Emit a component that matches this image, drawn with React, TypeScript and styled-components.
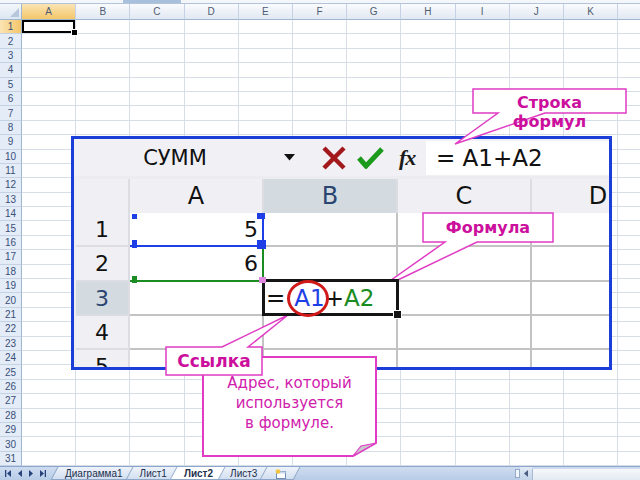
import React from "react";
import styled, { createGlobalStyle, css } from "styled-components";

const GlobalStyle = createGlobalStyle`
  html, body { margin: 0; padding: 0; background: #fff; }
  body { font-family: "Liberation Sans", Arial, sans-serif; }
`;

const Page = styled.div`
  position: relative;
  width: 640px;
  height: 480px;
  overflow: hidden;
  display: flex;
  flex-direction: column;
  background: #fff;
`;

const TopStrip = styled.div`
  flex: none;
  height: 3px;
  background: #f3f6fa;
  border-bottom: 1px solid #b3c3d9;
  display: flex;
  padding-left: 123px;
`;

const TopTab = styled.div`
  width: 58px;
  background: #a9c0dd;
`;

const Sheet = styled.div`
  flex: none;
  display: grid;
  grid-template-columns: 22px repeat(12, 54.2px);
  grid-template-rows: 16px repeat(31, 14.4px);
`;

const Corner = styled.div`
  box-sizing: border-box;
  background: linear-gradient(#f4f7fb, #dce6f2);
  border-right: 1px solid #9eb6ce;
  border-bottom: 1px solid #9eb6ce;
  display: flex;
  align-items: flex-end;
  justify-content: flex-end;
  padding: 2px;
`;

const CornerTri = styled.div`
  width: 0;
  height: 0;
  border-left: 9px solid transparent;
  border-bottom: 9px solid #b6c7dc;
`;

const ColHead = styled.div<{ $active?: boolean }>`
  box-sizing: border-box;
  display: flex;
  align-items: center;
  justify-content: center;
  font-size: 10px;
  color: #4f5d72;
  border-right: 1px solid #c5d2e3;
  border-bottom: 1px solid #9eb6ce;
  background: ${(p) =>
    p.$active
      ? "linear-gradient(#fbe4b4, #f4c66a)"
      : "linear-gradient(#f9fbfd, #e1e8f2)"};
`;

const RowHead = styled.div<{ $active?: boolean }>`
  box-sizing: border-box;
  display: flex;
  align-items: center;
  justify-content: center;
  font-size: 10px;
  color: #3a5077;
  border-right: 1px solid #9eb6ce;
  border-bottom: 1px solid #c5d2e3;
  background: ${(p) =>
    p.$active ? "linear-gradient(90deg, #fbe4b4, #f4c66a)" : "#e4ecf7"};
`;

const Cell = styled.div<{ $selected?: boolean }>`
  box-sizing: border-box;
  position: relative;
  border-right: 1px solid #d8dee8;
  border-bottom: 1px solid #d8dee8;
  ${(p) =>
    p.$selected &&
    css`
      box-shadow: inset 0 0 0 2px #000;
      &::after {
        content: "";
        position: absolute;
        right: -3px;
        bottom: -3px;
        width: 5px;
        height: 5px;
        background: #000;
        border: 1px solid #fff;
        z-index: 1;
      }
    `}
`;

/* ---------- sheet tabs ---------- */

const TabBar = styled.div`
  flex: 1;
  display: flex;
  align-items: stretch;
  background: linear-gradient(#cedcf0, #b8cce7);
  border-top: 1px solid #8aa6cc;
  isolation: isolate;
`;

const Nav = styled.div`
  width: 50px;
  box-sizing: border-box;
  display: flex;
  align-items: center;
  justify-content: space-between;
  padding: 0 4px 0 5px;
`;

const Tabs = styled.div`
  display: flex;
  align-items: stretch;
  padding-left: 4px;
`;

const Tab = styled.div<{ $active?: boolean }>`
  position: relative;
  z-index: ${(p) => (p.$active ? 3 : 1)};
  display: flex;
  align-items: center;
  padding: 0 9px 0 11px;
  margin-right: -3px;
  font-size: 10px;
  color: #1d2f4e;
  font-weight: ${(p) => (p.$active ? 700 : 400)};
  &::before {
    content: "";
    position: absolute;
    inset: 0 0 0 0;
    z-index: -1;
    transform: skewX(-28deg);
    background: ${(p) =>
      p.$active ? "#ffffff" : "linear-gradient(#eef3fa, #d3dff0)"};
    border: 1px solid #8ea7c9;
    border-top: none;
  }
`;

const NewTab = styled(Tab)`
  padding: 0 10px 0 12px;
`;

const HScroll = styled.div`
  margin-left: auto;
  width: 125px;
  display: flex;
  align-items: stretch;
`;

const Splitter = styled.div`
  width: 3px;
  margin: 2px 0;
  background: #f2f5fa;
  border: 1px solid #94a9c6;
`;

const ScrollBtn = styled.div`
  width: 12px;
  display: flex;
  align-items: center;
  justify-content: center;
  background: linear-gradient(#e2eaf5, #c4d4ea);
`;

const Track = styled.div`
  flex: 1;
  margin-top: 2px;
  background: linear-gradient(#f6f8fb, #e4eaf2);
  border-left: 1px solid #a8bad2;
`;

/* ---------- magnified inset ---------- */

const Inset = styled.div`
  position: absolute;
  left: 71px;
  top: 136px;
  width: 541px;
  height: 234px;
  box-sizing: border-box;
  border: 3px solid #1b3ed8;
  background: #ececf1;
  display: flex;
  flex-direction: column;
  overflow: hidden;
  font-family: "DejaVu Sans", Verdana, sans-serif;
  color: #111;
`;

const FormulaBar = styled.div`
  flex: none;
  height: 37px;
  display: flex;
  align-items: center;
  background: #f0f0f5;
`;

const NameBox = styled.div`
  width: 202px;
  text-align: center;
  font-size: 21px;
`;

const DropSlot = styled.div`
  width: 26px;
  display: flex;
  justify-content: center;
`;

const ToolIcon = styled.svg<{ $gap: number }>`
  flex: none;
  margin-left: ${(p) => p.$gap}px;
`;

const FxLabel = styled.span`
  flex: none;
  width: 22px;
  margin-left: 15px;
  font-family: "Liberation Serif", "Times New Roman", serif;
  font-style: italic;
  font-weight: 700;
  font-size: 22px;
  letter-spacing: -1px;
  color: #1a1a1a;
`;

const FormulaInput = styled.div`
  flex: 1;
  align-self: stretch;
  margin: 2px 0 1px 5px;
  background: #fff;
  display: flex;
  align-items: center;
  padding-left: 10px;
  font-size: 23px;
  white-space: pre;
`;

const ZoomGrid = styled.div`
  flex: none;
  margin: 3px 0 0 2px;
  display: grid;
  grid-template-columns: 54px repeat(4, 134px);
  grid-template-rows: 34px 34px 35px 34px 34px 34px;
  background: #fff;
`;

const ZHead = styled.div<{ $active?: boolean }>`
  box-sizing: border-box;
  display: flex;
  align-items: center;
  justify-content: center;
  font-size: 24px;
  background: ${(p) => (p.$active ? "#d3dbe1" : "#f0f0f4")};
  color: ${(p) => (p.$active ? "#2b4570" : "#111")};
  border-right: 2px solid #dcdce3;
`;

const ZRowHead = styled.div<{ $active?: boolean }>`
  box-sizing: border-box;
  display: flex;
  align-items: center;
  justify-content: center;
  font-size: 22px;
  background: ${(p) => (p.$active ? "#d3dbe1" : "#f0f0f4")};
  color: ${(p) => (p.$active ? "#2b4570" : "#111")};
  border-bottom: 2px solid #dcdce3;
  border-right: 2px solid #dcdce3;
`;

type RangeColor = "blue" | "green";
const rangeColor = { blue: "#1f3fe6", green: "#1a8c22" };

const ZCell = styled.div<{ $range?: RangeColor; $editing?: boolean }>`
  box-sizing: border-box;
  position: relative;
  display: flex;
  align-items: center;
  justify-content: flex-end;
  padding-right: 4px;
  font-size: 22px;
  background: #fff;
  border-right: 2px solid ${(p) => (p.$range ? rangeColor[p.$range] : "#c3c3c3")};
  border-bottom: 2px solid ${(p) => (p.$range ? rangeColor[p.$range] : "#c3c3c3")};
  ${(p) =>
    p.$editing &&
    css`
      z-index: 2;
      justify-content: flex-start;
      padding: 0 0 0 2px;
      font-size: 23px;
      &::before {
        content: "";
        position: absolute;
        left: -2px;
        top: -3px;
        right: -3px;
        bottom: -2px;
        border: 3px solid #151515;
      }
      &::after {
        content: "";
        position: absolute;
        right: -6px;
        bottom: -5px;
        width: 7px;
        height: 7px;
        background: #151515;
        border: 1px solid #fff;
      }
    `}
`;

const Handle = styled.span<{
  $c: string;
  $l?: number;
  $r?: number;
  $t?: number;
  $b?: number;
  $w: number;
  $h: number;
}>`
  position: absolute;
  z-index: 3;
  width: ${(p) => p.$w}px;
  height: ${(p) => p.$h}px;
  background: ${(p) => p.$c};
  ${(p) => (p.$l !== undefined ? `left: ${p.$l}px;` : "")}
  ${(p) => (p.$r !== undefined ? `right: ${p.$r}px;` : "")}
  ${(p) => (p.$t !== undefined ? `top: ${p.$t}px;` : "")}
  ${(p) => (p.$b !== undefined ? `bottom: ${p.$b}px;` : "")}
`;

const Ref = styled.span<{ $c: string; $gap?: number }>`
  color: ${(p) => p.$c};
  margin-left: ${(p) => p.$gap ?? 0}px;
`;

const RedRing = styled.span`
  position: absolute;
  left: 23px;
  top: -2px;
  width: 42px;
  height: 37px;
  box-sizing: border-box;
  border: 3px solid #d01a1a;
  border-radius: 50%;
`;

/* ---------- callouts ---------- */

const Bubble = styled.div<{ $x: number; $y: number; $w: number; $h: number }>`
  position: absolute;
  left: ${(p) => p.$x}px;
  top: ${(p) => p.$y}px;
  width: ${(p) => p.$w}px;
  height: ${(p) => p.$h}px;
  pointer-events: none;
`;

const BubbleShape = styled.svg`
  position: absolute;
  inset: 0;
  width: 100%;
  height: 100%;
  overflow: visible;
`;

const BubbleLabel = styled.div<{ $top?: number; $bold?: boolean; $size: number; $lh: number }>`
  position: relative;
  height: 100%;
  box-sizing: border-box;
  display: flex;
  flex-direction: column;
  align-items: center;
  justify-content: ${(p) => (p.$top !== undefined ? "flex-start" : "center")};
  padding-top: ${(p) => p.$top ?? 0}px;
  font-family: "DejaVu Sans", Verdana, sans-serif;
  font-weight: ${(p) => (p.$bold ? 700 : 400)};
  font-size: ${(p) => p.$size}px;
  line-height: ${(p) => p.$lh}px;
  color: ${(p) => (p.$bold ? "#cc0f9c" : "#d020ac")};
  text-align: center;
  white-space: nowrap;
`;

type CalloutProps = {
  x: number;
  y: number;
  w: number;
  h: number;
  d: string;
  fold?: string;
  sw?: number;
  children: React.ReactNode;
};

function Callout({ x, y, w, h, d, fold, sw = 1.5, children }: CalloutProps) {
  return (
    <Bubble $x={x} $y={y} $w={w} $h={h}>
      <BubbleShape viewBox={`${x} ${y} ${w} ${h}`}>
        <path d={d} fill="#fff" stroke="#e03cc4" strokeWidth={sw} />
        {fold && <path d={fold} fill="#c8c8cc" stroke="#e03cc4" strokeWidth={1.2} />}
      </BubbleShape>
      {children}
    </Bubble>
  );
}

/* the 12th column is only partly on screen; its letter lies beyond the edge */
const cols = ["A", "B", "C", "D", "E", "F", "G", "H", "I", "J", "K", ""];
const rows = Array.from({ length: 31 }, (_, i) => i + 1);

const NavIcon = ({ kind }: { kind: "first" | "prev" | "next" | "last" }) => (
  <svg width="6" height="7" viewBox="0 0 6 7">
    {kind === "first" && (
      <>
        <rect x="0" y="0" width="1.3" height="7" fill="#28427a" />
        <polygon points="6,0 6,7 2,3.5" fill="#28427a" />
      </>
    )}
    {kind === "prev" && <polygon points="5,0 5,7 1,3.5" fill="#28427a" />}
    {kind === "next" && <polygon points="1,0 1,7 5,3.5" fill="#28427a" />}
    {kind === "last" && (
      <>
        <polygon points="0,0 0,7 4,3.5" fill="#28427a" />
        <rect x="4.7" y="0" width="1.3" height="7" fill="#28427a" />
      </>
    )}
  </svg>
);

export default function App() {
  return (
    <>
      <GlobalStyle />
      <Page>
        <TopStrip>
          <TopTab />
        </TopStrip>
        <Sheet>
          <Corner>
            <CornerTri />
          </Corner>
          {cols.map((c, i) => (
            <ColHead key={i} $active={i === 0}>
              {c}
            </ColHead>
          ))}
          {rows.map((r) => (
            <React.Fragment key={r}>
              <RowHead $active={r === 1}>{r}</RowHead>
              {cols.map((c, i) => (
                <Cell key={i} $selected={r === 1 && i === 0} />
              ))}
            </React.Fragment>
          ))}
        </Sheet>
        <TabBar>
          <Nav>
            <NavIcon kind="first" />
            <NavIcon kind="prev" />
            <NavIcon kind="next" />
            <NavIcon kind="last" />
          </Nav>
          <Tabs>
            <Tab>Диаграмма1</Tab>
            <Tab>Лист1</Tab>
            <Tab $active>Лист2</Tab>
            <Tab>Лист3</Tab>
            <NewTab>
              <svg width="12" height="10" viewBox="0 0 12 10">
                <rect x="1.5" y="2.5" width="9" height="7" fill="#fff" stroke="#6f8db8" />
                <rect x="1.5" y="2.5" width="9" height="2" fill="#c9d8ee" />
                <circle cx="3" cy="2.5" r="2.3" fill="#f3c640" />
              </svg>
            </NewTab>
          </Tabs>
          <HScroll>
            <Splitter />
            <ScrollBtn>
              <svg width="4" height="7" viewBox="0 0 4 7">
                <polygon points="4,0 4,7 0,3.5" fill="#4a5f80" />
              </svg>
            </ScrollBtn>
            <Track />
          </HScroll>
        </TabBar>

        <Inset>
          <FormulaBar>
            <NameBox>СУММ</NameBox>
            <DropSlot>
              <svg width="11" height="7" viewBox="0 0 11 7">
                <polygon points="0,0 11,0 5.5,6.5" fill="#111" />
              </svg>
            </DropSlot>
            <ToolIcon $gap={19} width="26" height="24" viewBox="0 0 26 24">
              <path d="M3 2 L23 22 M23 2 L3 22" stroke="#a3191b" strokeWidth="4.5" />
            </ToolIcon>
            <ToolIcon $gap={10} width="27" height="22" viewBox="0 0 27 22">
              <path d="M2 11 L9 19 L25 2" fill="none" stroke="#1c9a1c" strokeWidth="5" />
            </ToolIcon>
            <FxLabel>fx</FxLabel>
            <FormulaInput>= A1+A2</FormulaInput>
          </FormulaBar>
          <ZoomGrid>
            <ZHead />
            <ZHead>A</ZHead>
            <ZHead $active>B</ZHead>
            <ZHead>C</ZHead>
            <ZHead>D</ZHead>

            <ZRowHead>1</ZRowHead>
            <ZCell $range="blue">
              5
              <Handle $c="#1f3fe6" $l={2} $t={1} $w={5} $h={5} />
              <Handle $c="#1f3fe6" $r={-3} $t={0} $w={8} $h={6} />
              <Handle $c="#1f3fe6" $l={2} $b={-3} $w={5} $h={8} />
              <Handle $c="#1f3fe6" $r={-4} $b={-4} $w={9} $h={9} />
            </ZCell>
            <ZCell />
            <ZCell />
            <ZCell />

            <ZRowHead>2</ZRowHead>
            <ZCell $range="green">
              6
              <Handle $c="#1a8c22" $l={2} $b={-3} $w={5} $h={7} />
              <Handle $c="#e089e0" $r={-4} $b={-3} $w={7} $h={6} />
            </ZCell>
            <ZCell />
            <ZCell />
            <ZCell />

            <ZRowHead $active>3</ZRowHead>
            <ZCell />
            <ZCell $editing>
              <span>=</span>
              <Ref $c="#1f3fe6" $gap={9}>A1</Ref>
              <span>+</span>
              <Ref $c="#1a8c22">A2</Ref>
              <RedRing />
            </ZCell>
            <ZCell />
            <ZCell />

            <ZRowHead>4</ZRowHead>
            <ZCell />
            <ZCell />
            <ZCell />
            <ZCell />

            <ZRowHead>5</ZRowHead>
            <ZCell />
            <ZCell />
            <ZCell />
            <ZCell />
          </ZoomGrid>
        </Inset>

        <Callout x={473} y={89} w={153} h={24} d="M473 89 H626 V113 H545 L455 144 L498 113 H473 Z">
          <BubbleLabel $bold $size={16} $lh={19} $top={4}>
            <span>Строка</span>
            <span>формул</span>
          </BubbleLabel>
        </Callout>

        <Callout x={423} y={213} w={130} h={29} d="M423 213 H553 V242 H477 L377 290 L445 242 H423 Z">
          <BubbleLabel $bold $size={16} $lh={20}>
            Формула
          </BubbleLabel>
        </Callout>

        <Callout
          x={203}
          y={357}
          w={173}
          h={100}
          sw={2}
          d="M203 357 H376 V443 L353 456 H203 Z"
          fold="M376 443 L361 446 L353 456 Z"
        >
          <BubbleLabel $size={15} $lh={20} $top={16}>
            <span>Адрес, который</span>
            <span>используется</span>
            <span>в формуле.</span>
          </BubbleLabel>
        </Callout>

        <Callout x={166} y={347} w={96} h={28} d="M166 347 H222 L288 315 L248 347 H262 V375 H166 Z">
          <BubbleLabel $bold $size={17} $lh={20}>
            Ссылка
          </BubbleLabel>
        </Callout>
      </Page>
    </>
  );
}
